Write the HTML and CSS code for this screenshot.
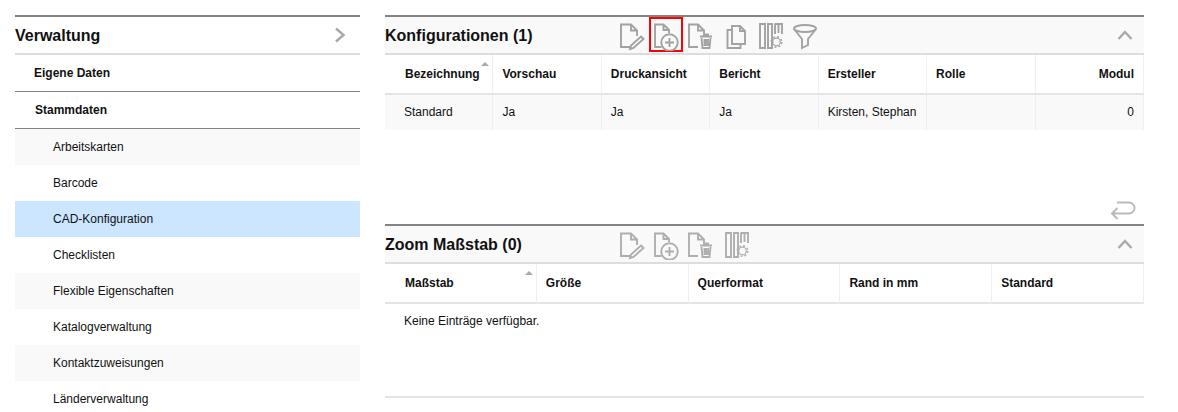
FILE: index.html
```html
<!DOCTYPE html>
<html lang="de">

<head>
    <meta charset="UTF-8">
    <title>Verwaltung</title>
    <link rel="stylesheet" href="styles.css">
</head>

<body>
    <svg class="sprites" width="0" height="0">
        <symbol id="i-edit" viewBox="0 0 26 28">
            <path d="M11 24H1V1.500h10l6 6V13M11 1.500v6h6" />
            <path d="M21 13.500l2.500 2.500-10 9-3.500 1 1-3.500z" />
        </symbol>
        <symbol id="i-add" viewBox="0 0 26 28">
            <path d="M7.500 24H1V1.500h8.500l5.500 5.500V10M9.500 1.500V7H15" />
            <circle cx="15.500" cy="19.500" r="8.200" />
            <path d="M15.500 15v9M11 19.500h9" />
        </symbol>
        <symbol id="i-delete" viewBox="0 0 26 28">
            <path d="M10 24H1V1.500h9l6 6V11M10 1.500v6h6" />
            <path d="M12 13.500h12M16 13v-1.500h4V13M13.500 15l1 10h7l1-10M16.500 16v7M18 16v7M20 16v7" />
        </symbol>
        <symbol id="i-copy" viewBox="0 0 26 28">
            <path d="M10 3h8l5 5v13H10zM18 3v5h5" />
            <path d="M10 7H5.500v18h13v-4" />
        </symbol>
        <symbol id="i-columns" viewBox="0 0 26 28">
            <path d="M1 1h5v24H1zM9 1h4v24H9zM16 1v10M19.500 1v9M23 1v10M15.500 1H24" />
            <circle class="gear" cx="17.500" cy="19" r="3.800" />
            <circle class="teeth" cx="17.500" cy="19" r="5.300" />
        </symbol>
        <symbol id="i-filter" viewBox="0 0 26 28">
            <ellipse cx="12" cy="5.500" rx="11" ry="3.500" />
            <path d="M1 6l8 10v9l6-3v-6l8-10" />
        </symbol>
    </svg>

    <div class="page">
        <nav class="sidebar">
            <div class="side-title">
                <span>Verwaltung</span>
                <svg class="chevron" width="12" height="16" viewBox="0 0 12 16"><path d="M2 1.500L9.500 8 2 14.500" /></svg>
            </div>
            <div class="side-group first">Eigene Daten</div>
            <div class="side-group">Stammdaten</div>
            <div class="side-item grey">Arbeitskarten</div>
            <div class="side-item">Barcode</div>
            <div class="side-item active">CAD-Konfiguration</div>
            <div class="side-item">Checklisten</div>
            <div class="side-item grey">Flexible Eigenschaften</div>
            <div class="side-item">Katalogverwaltung</div>
            <div class="side-item grey">Kontaktzuweisungen</div>
            <div class="side-item">Länderverwaltung</div>
        </nav>

        <main class="content">
            <section class="panel">
                <header class="panel-head">
                    <h2>Konfigurationen (1)</h2>
                    <div class="tools">
                        <button class="tool"><svg><use href="#i-edit" /></svg></button>
                        <button class="tool marked"><svg><use href="#i-add" /></svg></button>
                        <button class="tool"><svg><use href="#i-delete" /></svg></button>
                        <button class="tool"><svg><use href="#i-copy" /></svg></button>
                        <button class="tool cols"><svg><use href="#i-columns" /></svg></button>
                        <button class="tool"><svg><use href="#i-filter" /></svg></button>
                    </div>
                    <svg class="collapse" width="16" height="10" viewBox="0 0 16 10"><path d="M1.500 9L8 2l6.500 7" /></svg>
                </header>
                <div class="panel-body top-body">
                    <table>
                        <thead>
                            <tr>
                                <th class="sorted">Bezeichnung</th>
                                <th>Vorschau</th>
                                <th>Druckansicht</th>
                                <th>Bericht</th>
                                <th>Ersteller</th>
                                <th>Rolle</th>
                                <th class="num">Modul</th>
                            </tr>
                        </thead>
                        <tbody>
                            <tr>
                                <td>Standard</td>
                                <td>Ja</td>
                                <td>Ja</td>
                                <td>Ja</td>
                                <td>Kirsten, Stephan</td>
                                <td></td>
                                <td class="num">0</td>
                            </tr>
                        </tbody>
                    </table>
                </div>
                <div class="back-row">
                    <svg class="back" width="26" height="19" viewBox="0 0 26 19"><path d="M7 1.500h12a5.500 5.500 0 0 1 0 11H2M7.500 7L2 12.500 7.500 18" /></svg>
                </div>
            </section>

            <section class="panel">
                <header class="panel-head">
                    <h2>Zoom Maßstab (0)</h2>
                    <div class="tools light">
                        <button class="tool"><svg><use href="#i-edit" /></svg></button>
                        <button class="tool"><svg><use href="#i-add" /></svg></button>
                        <button class="tool"><svg><use href="#i-delete" /></svg></button>
                        <button class="tool cols"><svg><use href="#i-columns" /></svg></button>
                    </div>
                    <svg class="collapse" width="16" height="10" viewBox="0 0 16 10"><path d="M1.500 9L8 2l6.500 7" /></svg>
                </header>
                <div class="panel-body bottom-body">
                    <table>
                        <thead>
                            <tr>
                                <th class="sorted">Maßstab</th>
                                <th>Größe</th>
                                <th>Querformat</th>
                                <th>Rand in mm</th>
                                <th>Standard</th>
                            </tr>
                        </thead>
                    </table>
                    <p class="empty">Keine Einträge verfügbar.</p>
                </div>
            </section>
        </main>
    </div>
</body>

</html>
```

FILE: styles.css
```css
html,
body {
    margin: 0;
    height: 412px;
    overflow: hidden;
    background-color: #fff;
    color: #111;
    font-family: "Liberation Sans", Arial, sans-serif;
    font-size: 12px;
}

.sprites {
    position: absolute;
}

.sprites path,
.sprites circle,
.sprites ellipse {
    fill: none;
    stroke: #a2a2a2;
    stroke-width: 1.900;
}

.sprites .gear {
    stroke-width: 1.200;
}

.sprites .teeth {
    stroke-width: 1.400;
    stroke-dasharray: 2 2.160;
}

.page {
    display: flex;
    gap: 25px;
    padding: 15px 0 0 15px;
}

/* left menu */
.sidebar {
    width: 345px;
    flex-shrink: 0;
}

.side-title {
    display: flex;
    justify-content: space-between;
    align-items: center;
    height: 36px;
    padding-right: 14px;
    border-top: 2px solid #848484;
    border-bottom: 2px solid #ddd;
    font-size: 16px;
    font-weight: bold;
}

.side-title span {
    padding-top: 2px;
}

.chevron path {
    fill: none;
    stroke: #aaa;
    stroke-width: 2.500;
}

.side-group {
    height: 37px;
    line-height: 36px;
    box-sizing: border-box;
    padding-left: 20px;
    border-bottom: 1px solid #848484;
    font-weight: bold;
}

.side-group.first {
    padding-left: 19px;
}

.side-item {
    height: 36px;
    line-height: 37px;
    padding-left: 38px;
}

.side-item.grey {
    background-color: #f9f9f9;
}

.side-item.active {
    background-color: #cce6ff;
}

/* right panels */
.content {
    width: 759px;
    flex-shrink: 0;
}

.panel-head {
    display: flex;
    align-items: flex-start;
    height: 36px;
    border-top: 2px solid #848484;
    border-bottom: 2px solid #ddd;
    background-color: #f9f9f9;
}

.panel-head h2 {
    width: 230px;
    margin: 0;
    font-size: 16px;
    line-height: 38px;
}

.tools {
    display: flex;
    flex-grow: 1;
}

.tool {
    width: 34px;
    height: 35px;
    box-sizing: border-box;
    padding: 5px 0 0 5px;
    border: none;
    background: none;
}

.tool svg {
    display: block;
    width: 26px;
    height: 28px;
}

.tool.cols {
    margin-left: 3px;
}

.tool.marked {
    box-shadow: inset 0 0 0 2px #f00;
}

.tools.light svg {
    opacity: 0.85;
}

.collapse {
    margin: 13px 11px 0 0;
}

.collapse path {
    fill: none;
    stroke: #aaa;
    stroke-width: 2.500;
}

.panel-body.top-body {
    height: 142px;
}

.panel-body.bottom-body {
    height: 132px;
    border-bottom: 2px solid #e4e4e4;
}

table {
    width: 100%;
    table-layout: fixed;
    border-collapse: separate;
    border-spacing: 0;
}

th,
td {
    box-sizing: border-box;
    padding: 0 9px;
    border-right: 1px solid #efefef;
    text-align: left;
}

th {
    position: relative;
    height: 40px;
    padding-bottom: 1px;
    border-bottom: 2px solid #e4e4e4;
}

td {
    height: 35px;
    padding-bottom: 2px;
    background-color: #f9f9f9;
}

th:first-child {
    padding-left: 20px;
}

td:first-child {
    padding-left: 19px;
}

th.num,
td.num {
    text-align: right;
}

/* small sort marker in the header corner */
th.sorted::after {
    content: "";
    position: absolute;
    top: 7px;
    right: 3px;
    border-left: 4px solid transparent;
    border-right: 4px solid transparent;
    border-bottom: 4px solid #aaa;
}

.empty {
    margin: 0;
    padding: 10px 0 0 19px;
    line-height: 14px;
}

.back-row {
    display: flex;
    justify-content: flex-end;
    height: 27px;
    padding-right: 8px;
    box-sizing: border-box;
    padding-top: 4px;
}

.back path {
    fill: none;
    stroke: #bbb;
    stroke-width: 2;
}
```
